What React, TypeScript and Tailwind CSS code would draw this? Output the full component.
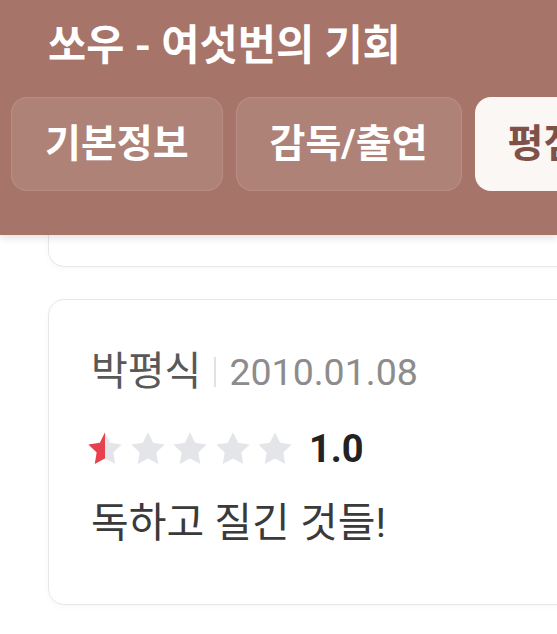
const tabs = [
  { label: "기본정보", active: false },
  { label: "감독/출연", active: false },
  { label: "평점", active: true },
];

function Star({ fill }: { fill: "full" | "half" | "empty" }) {
  const id = `g-${fill}`;
  const cut = fill === "half" ? "0.5" : fill === "full" ? "1" : "0";
  return (
    <svg width="40" height="40" viewBox="0 0 24 24" className="shrink-0">
      <defs>
        <linearGradient id={id} x1="0" x2="1" y1="0" y2="0">
          <stop offset="0" stopColor="#e8414d" />
          <stop offset={cut} stopColor="#e8414d" />
          <stop offset={cut} stopColor="#e4e5e9" />
          <stop offset="1" stopColor="#e4e5e9" />
        </linearGradient>
      </defs>
      <path
        d="M12 2l3.09 6.26L22 9.27l-5 4.87 1.18 6.88L12 17.77l-6.18 3.25L7 14.14 2 9.27l6.91-1.01L12 2z"
        fill={`url(#${id})`}
      />
    </svg>
  );
}

export default function App() {
  return (
    <div
      className="w-[557px] h-[634px] overflow-hidden bg-white"
      style={{ fontFamily: "Roboto, 'Noto Sans CJK KR', sans-serif" }}
    >
      {/* Header */}
      <header className="relative z-10 bg-[#a67469] shadow-[0_3px_8px_rgba(0,0,0,0.12)] pb-[44px]">
        <h1 className="pl-[48px] pt-[19px] text-[41.5px] leading-[54px] font-bold text-white whitespace-nowrap">
          쏘우 - 여섯번의 기회
        </h1>
        <div className="mt-[24px] flex gap-[13px] pl-[11px] whitespace-nowrap">
          {tabs.map((t) => (
            <button
              key={t.label}
              className={
                t.active
                  ? "h-[94px] shrink-0 px-[33px] rounded-[16px] bg-[#fbf7f5] text-[#7e5149] text-[39px] font-bold flex items-center"
                  : "h-[94px] shrink-0 px-[33px] rounded-[16px] bg-white/10 border border-white/10 text-white text-[39px] font-bold flex items-center"
              }
            >
              {t.label}
            </button>
          ))}
        </div>
      </header>

      <div className="pl-[48px]">
        {/* previous card, scrolled under header */}
        <div className="h-[32px] w-[560px] border-x border-b border-[#e6e7ea] rounded-b-[16px] shadow-[0_2px_6px_rgba(0,0,0,0.03)]" />

        {/* review card */}
        <div className="mt-[32px] w-[560px] border border-[#e6e7ea] rounded-[16px] shadow-[0_2px_6px_rgba(0,0,0,0.03)] pl-[42px] pr-[43px] pt-[45px] pb-[52px]">
          <div className="flex items-center leading-[54px] whitespace-nowrap">
            <span className="text-[40px] text-[#585858]">박평식</span>
            <span className="mx-[13px] w-[2px] h-[30px] bg-[#e2e2e2]" />
            <span className="text-[37.5px] text-[#8c8c8c]">2010.01.08</span>
          </div>
          <div className="mt-[30px] flex items-center">
            <div className="flex gap-[2.5px] -ml-[6px]">
              <Star fill="half" />
              <Star fill="empty" />
              <Star fill="empty" />
              <Star fill="empty" />
              <Star fill="empty" />
            </div>
            <span className="ml-[14px] text-[38px] font-bold text-[#222222] leading-none">1.0</span>
          </div>
          <p className="mt-[26px] text-[41px] leading-[57px] text-[#3a3a3a] whitespace-nowrap">
            독하고 질긴 것들!
          </p>
        </div>
      </div>
    </div>
  );
}
